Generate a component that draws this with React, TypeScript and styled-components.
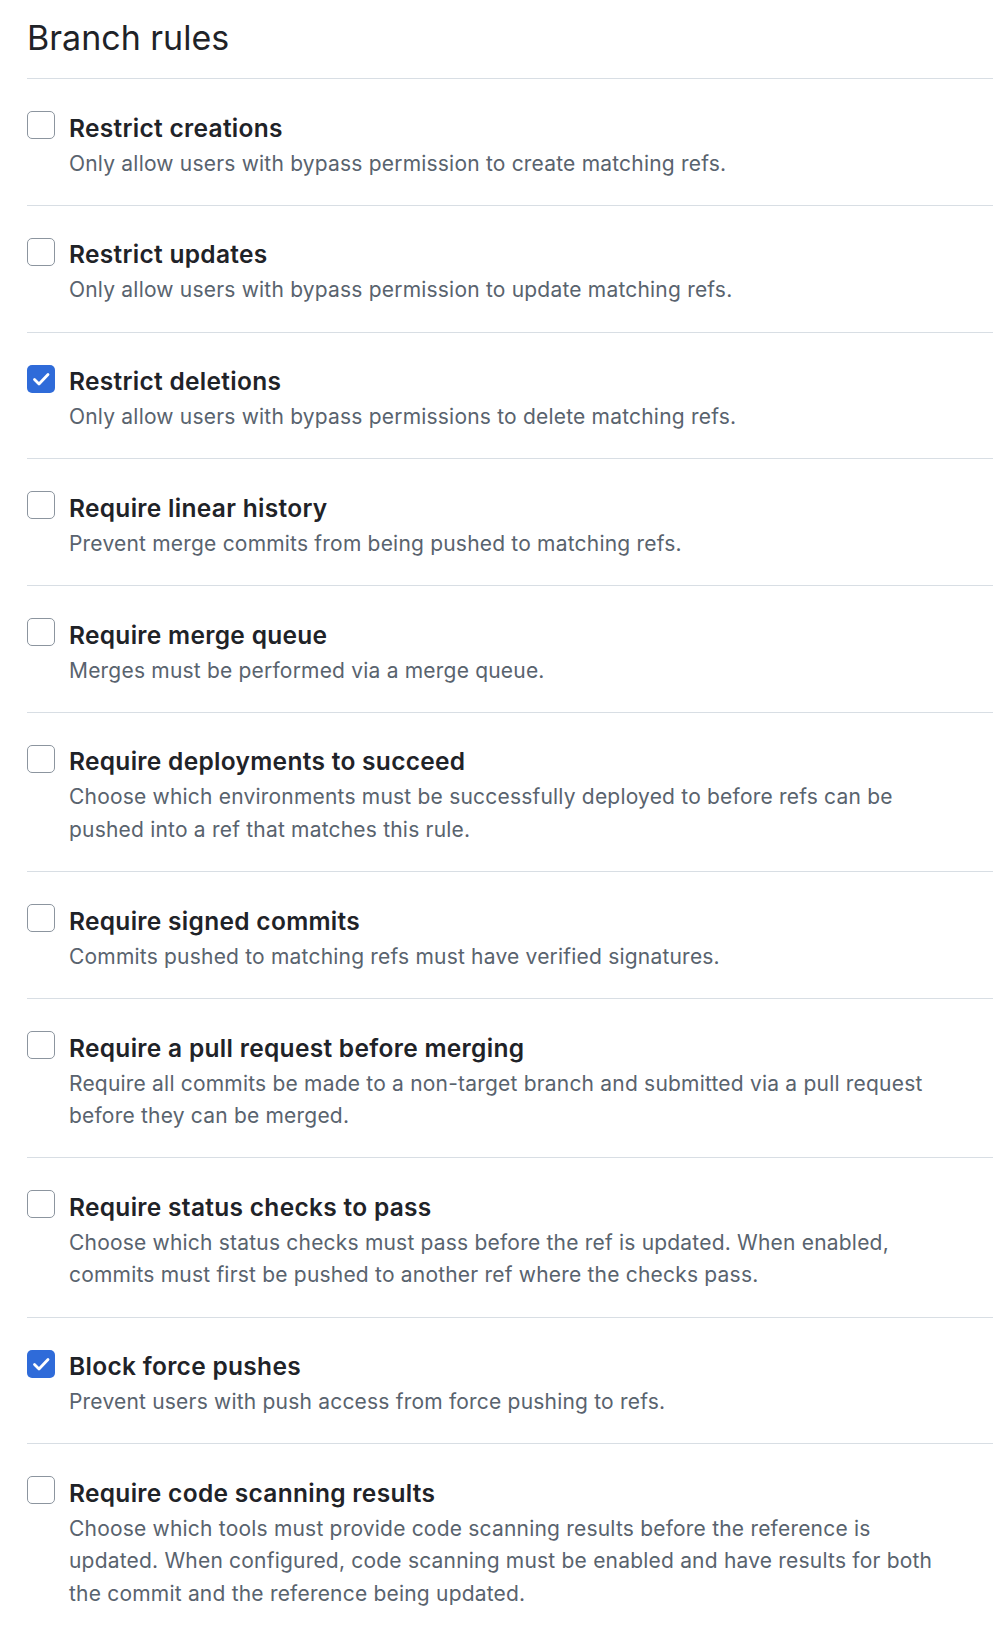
import React from "react";
import styled, { createGlobalStyle } from "styled-components";

const GlobalStyle = createGlobalStyle`
  html, body { margin: 0; padding: 0; background: #ffffff; }
  body {
    font-family: Inter, "Noto Sans", "Liberation Sans", sans-serif;
    color: #1f2328;
    -webkit-font-smoothing: antialiased;
  }
`;

const Page = styled.div`
  padding: 12px 15px 0 27px;
`;

const Header = styled.div`
  border-bottom: 1px solid #d8dee4;
  padding-bottom: 15px;
`;

const Title = styled.h2`
  margin: 0;
  font-size: 34px;
  font-weight: 400;
  line-height: 1.5;
  color: #1f2328;
`;

const List = styled.div`
  display: flex;
  flex-direction: column;
`;

const Row = styled.label`
  display: flex;
  align-items: flex-start;
  gap: 14px;
  padding: 29.5px 0 24.8px;
  border-bottom: 1px solid #d8dee4;
  &:last-child { border-bottom: none; }
`;

const Box = styled.span<{ $checked: boolean }>`
  flex: 0 0 auto;
  width: 28px;
  height: 28px;
  margin-top: 2.5px;
  box-sizing: border-box;
  border-radius: 5px;
  display: flex;
  align-items: center;
  justify-content: center;
  background: ${(p) => (p.$checked ? "#2f6bd9" : "#ffffff")};
  border: ${(p) => (p.$checked ? "none" : "1.5px solid #8c959f")};
`;

const Text = styled.div`
  display: flex;
  flex-direction: column;
  min-width: 0;
`;

const Name = styled.span`
  font-size: 24.5px;
  font-weight: 600;
  line-height: 39px;
  letter-spacing: 0.3px;
  color: #1f2328;
`;

const Desc = styled.span`
  font-size: 21px;
  line-height: 32.5px;
  letter-spacing: 0.2px;
  color: #59636e;
  max-width: 875px;
`;

const Check = () => (
  <svg width="28" height="28" viewBox="0 0 28 28" fill="none">
    <path
      d="M7.5 14.5 L12 19 L21 9.5"
      stroke="#ffffff"
      strokeWidth="2.8"
      strokeLinecap="round"
      strokeLinejoin="round"
    />
  </svg>
);

const rules: { name: string; desc: string; checked?: boolean }[] = [
  { name: "Restrict creations", desc: "Only allow users with bypass permission to create matching refs." },
  { name: "Restrict updates", desc: "Only allow users with bypass permission to update matching refs." },
  { name: "Restrict deletions", desc: "Only allow users with bypass permissions to delete matching refs.", checked: true },
  { name: "Require linear history", desc: "Prevent merge commits from being pushed to matching refs." },
  { name: "Require merge queue", desc: "Merges must be performed via a merge queue." },
  {
    name: "Require deployments to succeed",
    desc: "Choose which environments must be successfully deployed to before refs can be pushed into a ref that matches this rule.",
  },
  { name: "Require signed commits", desc: "Commits pushed to matching refs must have verified signatures." },
  {
    name: "Require a pull request before merging",
    desc: "Require all commits be made to a non-target branch and submitted via a pull request before they can be merged.",
  },
  {
    name: "Require status checks to pass",
    desc: "Choose which status checks must pass before the ref is updated. When enabled, commits must first be pushed to another ref where the checks pass.",
  },
  { name: "Block force pushes", desc: "Prevent users with push access from force pushing to refs.", checked: true },
  {
    name: "Require code scanning results",
    desc: "Choose which tools must provide code scanning results before the reference is updated. When configured, code scanning must be enabled and have results for both the commit and the reference being updated.",
  },
];

export default function App() {
  return (
    <>
      <GlobalStyle />
      <Page>
        <Header>
          <Title>Branch rules</Title>
        </Header>
        <List>
          {rules.map((r) => (
            <Row key={r.name}>
              <Box $checked={!!r.checked}>{r.checked && <Check />}</Box>
              <Text>
                <Name>{r.name}</Name>
                <Desc>{r.desc}</Desc>
              </Text>
            </Row>
          ))}
        </List>
      </Page>
    </>
  );
}
